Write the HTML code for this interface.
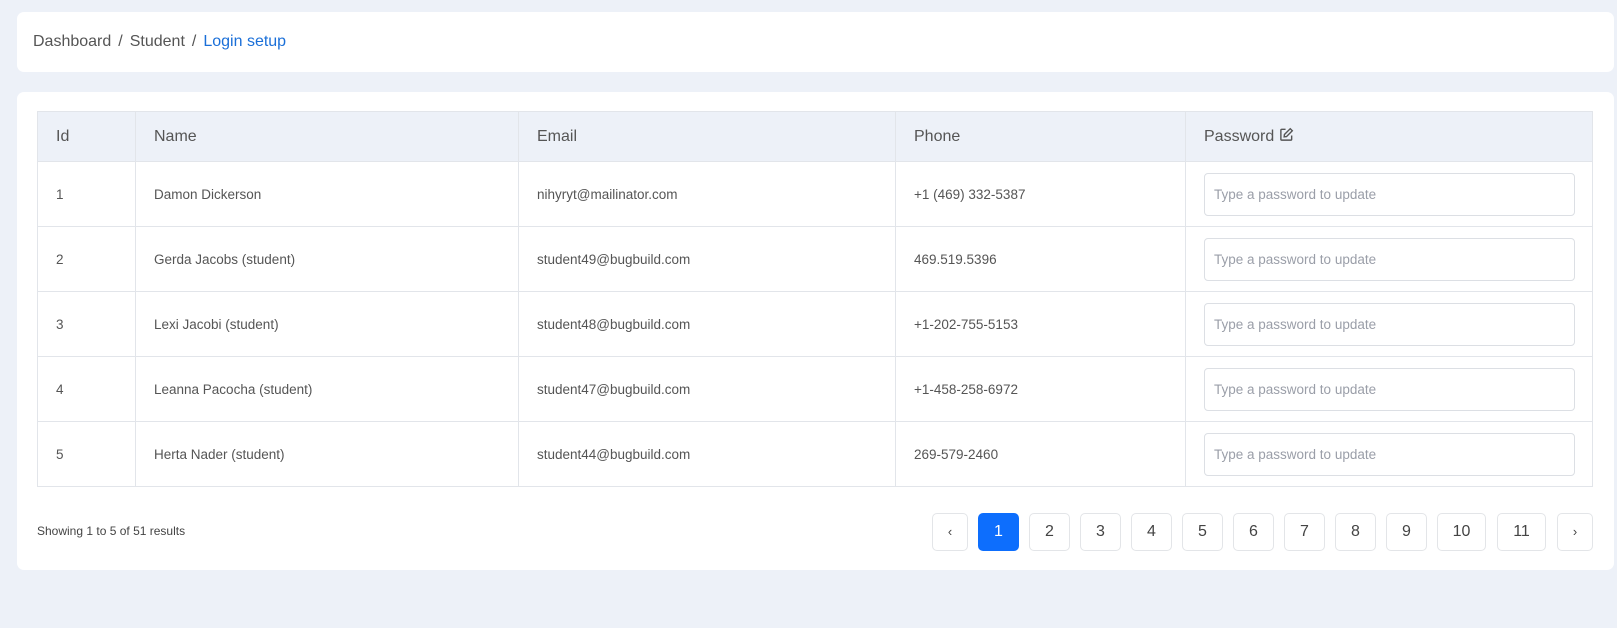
<!DOCTYPE html>
<html><head><style>
*{box-sizing:border-box;margin:0;padding:0}
body{width:1617px;height:628px;background:#edf1f8;font-family:"Liberation Sans",sans-serif;color:#555;position:relative;overflow:hidden}
.card{position:absolute;background:#fff;border-radius:7px}
.bc{left:17px;top:12px;width:1597px;height:60px;font-size:16px;padding:21px 0 0 16px;color:#555}
.bc span.s{margin:0 7px}
.bc .a{color:#1a6fd8}
.main{left:17px;top:92px;width:1597px;height:478px}
table{position:absolute;left:20px;top:19px;width:1556px;border-collapse:collapse;font-size:13.5px;table-layout:fixed}
th,td{border:1px solid #e2e5ea;text-align:left;font-weight:normal;padding:0 0 0 18px}
th{background:#edf1f8;height:50px;font-size:16px;color:#555}
td{height:65px;color:#555}
input{width:371px;height:43px;border:1px solid #dcdfe4;border-radius:4px;font-family:inherit;font-size:13.5px;padding-left:9px;color:#999}
input::placeholder{color:#9a9ea8}
.info{position:absolute;left:20px;top:432px;font-size:12px;color:#444}
.pg{position:absolute;top:421px;height:38px;border:1px solid #e3e5e8;border-radius:5px;text-align:center;line-height:36px;font-size:16px;color:#444}
.pg.on{background:#0d6efd;border-color:#0d6efd;color:#fff}
</style></head><body>
<div class="card bc">Dashboard<span class="s">/</span>Student<span class="s">/</span><span class="a">Login setup</span></div>
<div class="card main">
<table>
<colgroup><col style="width:98px"><col style="width:383px"><col style="width:377px"><col style="width:290px"><col></colgroup>
<tr><th>Id</th><th>Name</th><th>Email</th><th>Phone</th><th>Password <svg width="15" height="15" viewBox="0 0 16 16" style="vertical-align:-1px" fill="none" stroke="#555" stroke-width="1.5"><path d="M7 2.5H3a1 1 0 0 0-1 1V13a1 1 0 0 0 1 1h9.5a1 1 0 0 0 1-1V9"/><path d="M12 1.8l2.2 2.2L8 10.2 5.5 10.5 5.8 8z"/></svg></th></tr>
<tr><td>1</td><td>Damon Dickerson</td><td>nihyryt@mailinator.com</td><td>+1 (469) 332-5387</td><td><input placeholder="Type a password to update"></td></tr>
<tr><td>2</td><td>Gerda Jacobs (student)</td><td>student49@bugbuild.com</td><td>469.519.5396</td><td><input placeholder="Type a password to update"></td></tr>
<tr><td>3</td><td>Lexi Jacobi (student)</td><td>student48@bugbuild.com</td><td>+1-202-755-5153</td><td><input placeholder="Type a password to update"></td></tr>
<tr><td>4</td><td>Leanna Pacocha (student)</td><td>student47@bugbuild.com</td><td>+1-458-258-6972</td><td><input placeholder="Type a password to update"></td></tr>
<tr><td>5</td><td>Herta Nader (student)</td><td>student44@bugbuild.com</td><td>269-579-2460</td><td><input placeholder="Type a password to update"></td></tr>
</table>
<div class="info">Showing 1 to 5 of 51 results</div>
<div class="pg" style="left:915px;width:36px;font-size:13px">‹</div>
<div class="pg on" style="left:961px;width:41px">1</div>
<div class="pg" style="left:1012px;width:41px">2</div>
<div class="pg" style="left:1063px;width:41px">3</div>
<div class="pg" style="left:1114px;width:41px">4</div>
<div class="pg" style="left:1165px;width:41px">5</div>
<div class="pg" style="left:1216px;width:41px">6</div>
<div class="pg" style="left:1267px;width:41px">7</div>
<div class="pg" style="left:1318px;width:41px">8</div>
<div class="pg" style="left:1369px;width:41px">9</div>
<div class="pg" style="left:1420px;width:49px">10</div>
<div class="pg" style="left:1480px;width:49px">11</div>
<div class="pg" style="left:1540px;width:36px;font-size:13px">›</div>
</div>
</body></html>
